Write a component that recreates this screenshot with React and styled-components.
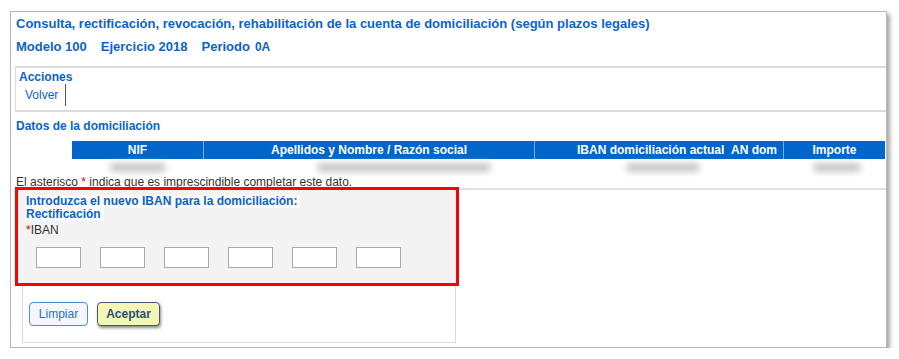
import React from "react";
import styled, { createGlobalStyle } from "styled-components";

const GlobalStyle = createGlobalStyle`
  html, body {
    margin: 0;
    padding: 0;
    background: #ffffff;
  }
  body {
    font-family: "Liberation Sans", Arial, sans-serif;
  }
`;

const Window = styled.div`
  margin: 11px 0 0 10px;
  width: 877px;
  height: 337px;
  border: 1px solid #b8b8b8;
  background: #fff;
  box-shadow: 3px 3px 4px rgba(0, 0, 0, 0.35);
  padding-left: 4px;
  box-sizing: border-box;
  display: flex;
  flex-direction: column;
`;

const Title = styled.div`
  color: #0b63c9;
  font-weight: 700;
  font-size: 13px;
  line-height: 16px;
  margin: 4px 0 0 1px;
`;

const SubTitle = styled.div`
  color: #0b63c9;
  font-weight: 700;
  font-size: 13px;
  line-height: 16px;
  margin: 7px 0 0 1px;
  display: flex;
  align-items: baseline;
  gap: 14px;
`;

const Period = styled.span`
  font-size: 12px;
  margin-left: 5px;
`;

const ActionsBox = styled.div`
  margin-top: 11px;
  height: 46px;
  border-top: 2px solid #dcdcdc;
  border-bottom: 2px solid #dcdcdc;
  border-left: 1px solid #dcdcdc;
  box-sizing: border-box;
  padding: 2px 0 0 3px;
`;

const ActionsLabel = styled.div`
  color: #0b63c9;
  font-weight: 700;
  font-size: 12px;
  line-height: 14px;
`;

const ActionLinks = styled.div`
  display: flex;
  align-items: center;
`;

const ActionLink = styled.span`
  color: #0b63c9;
  font-size: 12px;
  line-height: 22px;
  padding: 0 7px 0 6px;
  border-right: 1px solid #555;
`;

const SectionTitle = styled.div`
  color: #0b63c9;
  font-weight: 700;
  font-size: 12px;
  line-height: 14px;
  margin: 7px 0 0 1px;
`;

const Table = styled.div`
  margin: 8px 0 0 57px;
  width: 813px;
`;

const HeaderRow = styled.div`
  display: grid;
  grid-template-columns: 131px 331px 249px 102px;
  background: #0066cc;
  height: 18px;
`;

const HeadCell = styled.div`
  color: #fff;
  font-weight: 700;
  font-size: 12px;
  line-height: 18px;
  text-align: ${(p) => p.$align || "center"};
  padding-right: ${(p) => (p.$align === "right" ? "6px" : "0")};
  border-left: ${(p) => (p.$first ? "none" : "1px solid #7fa9dc")};
  white-space: nowrap;
  overflow: hidden;
`;

const DataRow = styled.div`
  display: grid;
  grid-template-columns: 131px 331px 249px 102px;
  height: 16px;
  align-items: center;
`;

const DataCell = styled.div`
  display: flex;
  justify-content: ${(p) => p.$justify || "center"};
  padding-left: ${(p) => p.$pad || 0}px;
`;

const Blur = styled.div`
  height: 9px;
  width: ${(p) => p.$w}px;
  border-radius: 5px;
  background: #c8c8c8;
  filter: blur(3px);
`;

const Note = styled.div`
  font-size: 12px;
  line-height: 14px;
  color: #333;
  margin: 0 0 0 1px;
`;

const Star = styled.span`
  color: #e00000;
`;

const FormArea = styled.div`
  margin-top: -1px;
  border-top: 2px solid #e2e2e2;
  display: flex;
  flex-direction: column;
  align-items: flex-start;
`;

const RedBox = styled.div`
  margin-top: -3px;
  width: 444px;
  height: 99px;
  box-sizing: border-box;
  border: 3px solid #ff0000;
  background: #f3f3f3;
  padding: 5px 0 0 7px;
`;

const Heading = styled.div`
  width: fit-content;
  background: #fbfbfb;
  color: #0b63c9;
  font-weight: 700;
  font-size: 12px;
  line-height: 13px;
  padding: 0 3px 0 1px;
`;

const FieldLabel = styled.div`
  font-size: 12px;
  line-height: 14px;
  color: #333;
  margin-top: 2px;
  margin-left: 1px;
`;

const Inputs = styled.div`
  display: flex;
  gap: 19px;
  margin: 10px 0 0 11px;
`;

const IbanInput = styled.input`
  width: 45px;
  height: 21px;
  box-sizing: border-box;
  border: 1px solid #a9a9a9;
  background: #fff;
  padding: 0;
`;

const ButtonPanel = styled.div`
  margin-left: 7px;
  width: 434px;
  height: 57px;
  box-sizing: border-box;
  border: 1px solid #dadada;
  border-top: none;
  display: flex;
  align-items: flex-start;
  gap: 9px;
  padding: 16px 0 0 6px;
`;

const Button = styled.button`
  font-family: "Liberation Sans", Arial, sans-serif;
  font-size: 12px;
  height: 24px;
  border-radius: 4px;
  padding: 0;
  cursor: pointer;
  width: ${(p) => p.$w}px;
  background: #f4f7fb;
  color: #2a6fc4;
  border: 1px solid #4a8fd8;
`;

const PrimaryButton = styled(Button)`
  background: #f6f5b8;
  color: #1e5470;
  font-weight: 700;
  border: 1px solid #3d5c70;
  box-shadow: 1px 2px 3px rgba(0, 0, 0, 0.45);
`;

export default function App() {
  return (
    <>
      <GlobalStyle />
      <Window>
        <Title>
          Consulta, rectificación, revocación, rehabilitación de la cuenta de
          domiciliación (según plazos legales)
        </Title>
        <SubTitle>
          <span>Modelo 100</span>
          <span>Ejercicio 2018</span>
          <span>
            Periodo<Period>0A</Period>
          </span>
        </SubTitle>
        <ActionsBox>
          <ActionsLabel>Acciones</ActionsLabel>
          <ActionLinks>
            <ActionLink>Volver</ActionLink>
          </ActionLinks>
        </ActionsBox>
        <SectionTitle>Datos de la domiciliación</SectionTitle>
        <Table>
          <HeaderRow>
            <HeadCell $first>NIF</HeadCell>
            <HeadCell>Apellidos y Nombre / Razón social</HeadCell>
            <HeadCell $align="right">IBAN domiciliación actual&nbsp;&nbsp;AN dom</HeadCell>
            <HeadCell>Importe</HeadCell>
          </HeaderRow>
          <DataRow>
            <DataCell>
              <Blur $w={56} />
            </DataCell>
            <DataCell $justify="flex-start" $pad={114}>
              <Blur $w={174} />
            </DataCell>
            <DataCell $justify="flex-start" $pad={92}>
              <Blur $w={74} />
            </DataCell>
            <DataCell $justify="flex-start" $pad={30}>
              <Blur $w={48} />
            </DataCell>
          </DataRow>
        </Table>
        <Note>
          El asterisco <Star>*</Star> indica que es imprescindible completar este
          dato.
        </Note>
        <FormArea>
          <RedBox>
            <Heading>Introduzca el nuevo IBAN para la domiciliación:</Heading>
            <Heading>Rectificación</Heading>
            <FieldLabel>
              <Star>*</Star>IBAN
            </FieldLabel>
            <Inputs>
              {[0, 1, 2, 3, 4, 5].map((i) => (
                <IbanInput key={i} type="text" />
              ))}
            </Inputs>
          </RedBox>
          <ButtonPanel>
            <Button $w={59}>Limpiar</Button>
            <PrimaryButton $w={63}>Aceptar</PrimaryButton>
          </ButtonPanel>
        </FormArea>
      </Window>
    </>
  );
}
